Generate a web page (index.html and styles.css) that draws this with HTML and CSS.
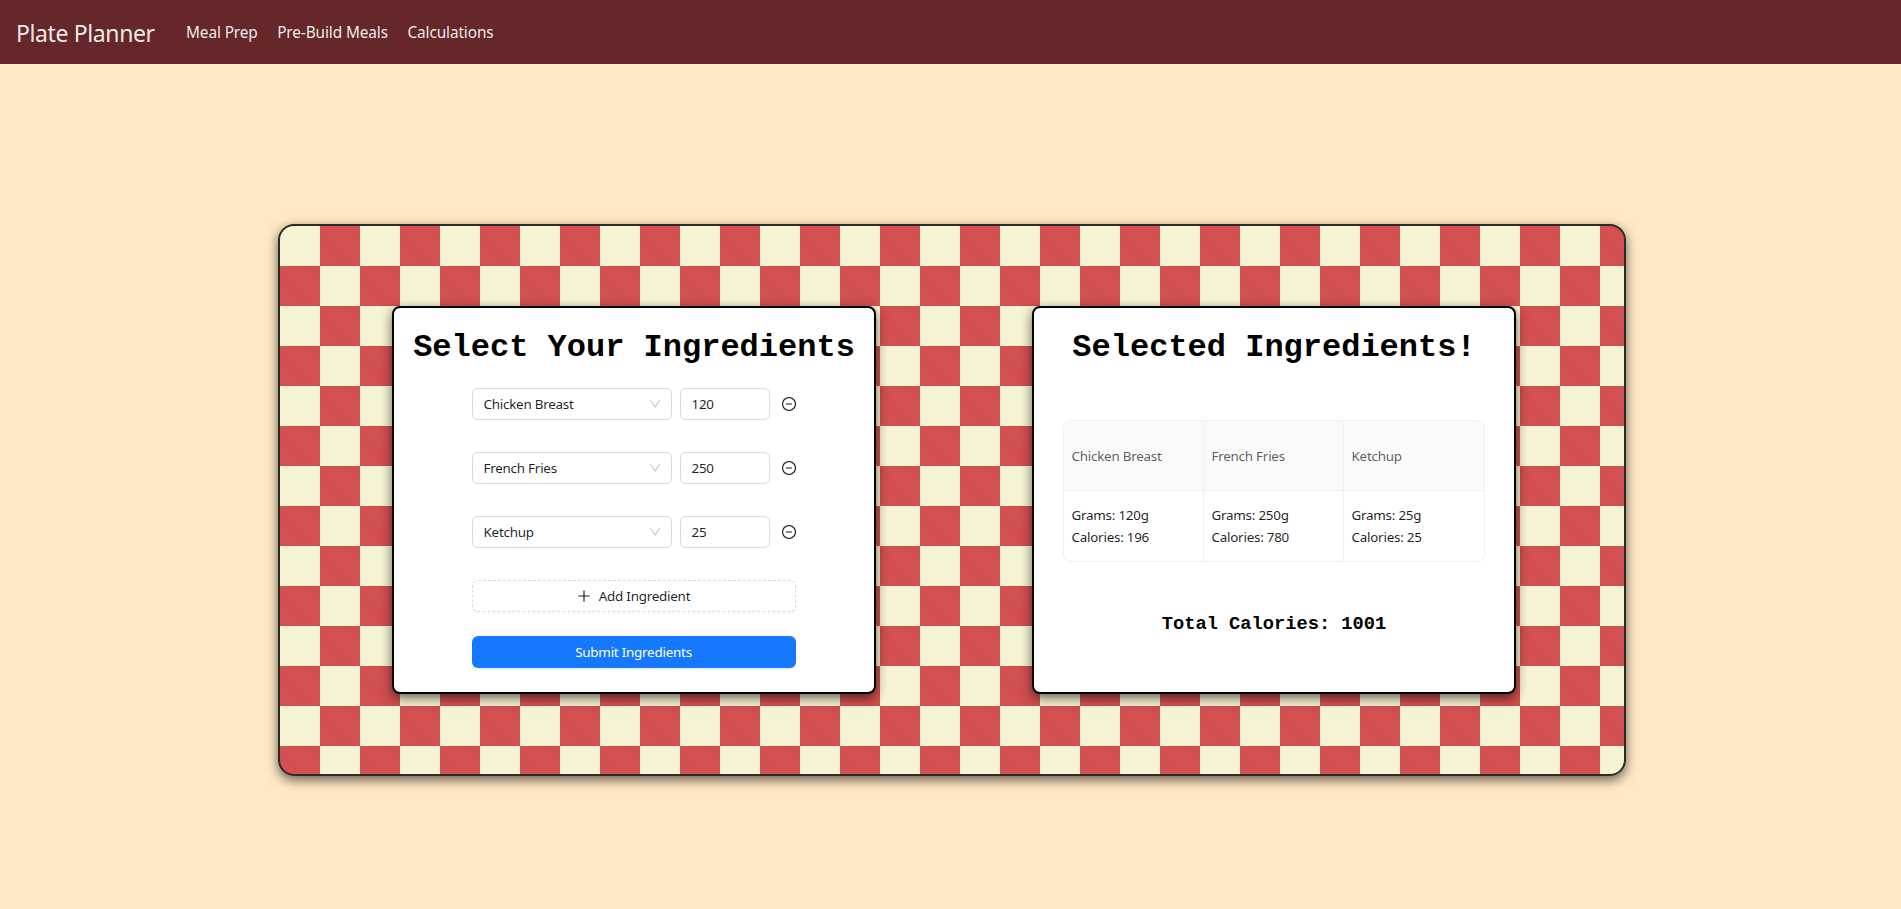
FILE: index.html
```html
<!DOCTYPE html>
<html lang="en">
<head>
<meta charset="utf-8">
<title>Plate Planner</title>
<link rel="stylesheet" href="styles.css">
</head>
<body>
<svg class="defs" aria-hidden="true">
  <symbol id="chevron" viewBox="64 64 896 896"><path d="M884 256h-75c-5.100 0-9.900 2.500-12.900 6.600L512 654.200 227.900 262.600c-3-4.100-7.800-6.600-12.900-6.600h-75c-6.500 0-10.300 7.400-6.500 12.700l352.600 486.100c12.800 17.600 39 17.600 51.700 0l352.600-486.100c3.900-5.300.1-12.700-6.400-12.700z"/></symbol>
  <symbol id="minus" viewBox="64 64 896 896"><path d="M696 480H328c-4.400 0-8 3.600-8 8v48c0 4.400 3.600 8 8 8h368c4.400 0 8-3.600 8-8v-48c0-4.400-3.600-8-8-8z"/><path d="M512 64C264.600 64 64 264.600 64 512s200.600 448 448 448 448-200.600 448-448S759.400 64 512 64zm0 820c-205.400 0-372-166.600-372-372s166.600-372 372-372 372 166.600 372 372-166.600 372-372 372z"/></symbol>
  <symbol id="plus" viewBox="64 64 896 896"><path d="M482 152h60q8 0 8 8v704q0 8-8 8h-60q-8 0-8-8V160q0-8 8-8z"/><path d="M192 474h672q8 0 8 8v60q0 8-8 8H160q-8 0-8-8v-60q0-8 8-8z"/></symbol>
</svg>
<header class="navbar">
  <a class="brand">Plate Planner</a>
  <nav class="links"><a>Meal Prep</a><a>Pre-Build Meals</a><a>Calculations</a></nav>
</header>
<main class="page">
  <section class="cloth">
    <div class="card">
      <h1 class="title">Select Your Ingredients</h1>
      <form class="form">
        <div class="row"><div class="select"><span>Chicken Breast</span><svg class="chevron"><use href="#chevron"/></svg></div><div class="input">120</div><svg class="minus"><use href="#minus"/></svg></div>
        <div class="row"><div class="select"><span>French Fries</span><svg class="chevron"><use href="#chevron"/></svg></div><div class="input">250</div><svg class="minus"><use href="#minus"/></svg></div>
        <div class="row"><div class="select"><span>Ketchup</span><svg class="chevron"><use href="#chevron"/></svg></div><div class="input">25</div><svg class="minus"><use href="#minus"/></svg></div>
        <button type="button" class="btn add"><svg class="plus"><use href="#plus"/></svg><span>Add Ingredient</span></button>
        <button type="button" class="btn submit"><span>Submit Ingredients</span></button>
      </form>
    </div>
    <div class="card">
      <h1 class="title">Selected Ingredients!</h1>
      <div class="table">
        <div class="cell head">Chicken Breast</div><div class="cell head">French Fries</div><div class="cell head">Ketchup</div>
        <div class="cell"><div>Grams: 120g</div><div>Calories: 196</div></div>
        <div class="cell"><div>Grams: 250g</div><div>Calories: 780</div></div>
        <div class="cell"><div>Grams: 25g</div><div>Calories: 25</div></div>
      </div>
      <h3 class="total">Total Calories: 1001</h3>
    </div>
  </section>
</main>
</body>
</html>
```
FILE: styles.css
```css
* { box-sizing: border-box; }
body { margin: 0; height: 909px; display: flex; flex-direction: column; background: #ffe8c4; font: 13.4px/22px "Noto Sans", sans-serif; color: rgba(0,0,0,.88); overflow: hidden; }
.defs { display: none; }
svg { fill: currentColor; flex: none; }
.navbar { height: 64px; flex: none; display: flex; align-items: center; padding-left: 16px; background: #652729; color: rgba(255,255,255,.92); }
.brand { width: 170px; font-size: 23px; line-height: 32px; letter-spacing: -.38px; padding-top: 2px; }
.links { display: flex; gap: 19.500px; font-size: 15.4px; line-height: 24px; letter-spacing: -.12px; white-space: nowrap; padding-top: 1px; }
.page { flex: 1; display: flex; justify-content: center; align-items: flex-start; padding-top: 160px; padding-left: 3px; }
.cloth {
  width: 1348px; height: 552px; display: flex; justify-content: center; align-items: center; gap: 156px; padding-left: 4px;
  border: 2px solid #2b2b2b; border-radius: 16px; box-shadow: 0 4px 12px rgba(0,0,0,.6);
  background:
    linear-gradient(45deg, rgba(255,255,200,.03), transparent 49.9%, rgba(255,255,200,.025) 50%, transparent) 0 0 / 40px 40px,
    repeating-conic-gradient(#d24e4e 0 25%, #f7f4d5 0 50%) 0 0 / 80px 80px;
}
.card { width: 484px; height: 388px; display: flex; flex-direction: column; align-items: center; border: 2px solid #000; border-radius: 8px; background: #fff; box-shadow: 0 4px 12px rgba(0,0,0,.6); }
.title { margin: 21px 0 0; font: bold 32px/38px "Courier New", "Liberation Mono", monospace; color: #000; white-space: nowrap; }
.form { width: 324px; margin-top: 21px; letter-spacing: -.23px; }
.row { height: 32px; margin-bottom: 32px; display: flex; align-items: center; }
.select, .input { height: 32px; display: flex; align-items: center; border: 1px solid #d9d9d9; border-radius: 6px; padding: 0 10px 0 10.5px; }
.select { width: 200px; justify-content: space-between; }
.input { width: 90px; margin-left: 8px; }
.chevron { width: 12px; height: 12px; color: #bfbfbf; }
.minus { width: 14px; height: 14px; margin-left: 12px; }
.btn { width: 324px; height: 32px; display: flex; align-items: center; justify-content: center; border-radius: 6px; font: inherit; letter-spacing: inherit; padding: 0 1px 0 0; }
.add { gap: 8px; color: rgba(0,0,0,.88); background: #fff; border: 1px dashed #d9d9d9; box-shadow: 0 2px 0 rgba(0,0,0,.02); }
.plus { width: 14px; height: 14px; }
.submit { margin-top: 24px; color: #fff; background: #1677ff; border: 0; box-shadow: 0 2px 0 rgba(5,145,255,.1); }
.table { width: 422px; height: 142px; margin-top: 53px; display: grid; grid-template-columns: 140px 140px 140px; grid-template-rows: 70px 70px; border: 1px solid #f0f0f0; border-radius: 8px; overflow: hidden; letter-spacing: -.23px; }
.cell { padding: 0 7.500px; border-right: 1px solid #f0f0f0; display: flex; flex-direction: column; justify-content: center; }
.cell:nth-child(3n) { border-right: 0; }
.head { background: #fafafa; color: rgba(0,0,0,.65); border-bottom: 1px solid #f0f0f0; padding-top: 1px; }
.total { margin: 51px 0 0; font: bold 18.720px/22px "Courier New", "Liberation Mono", monospace; color: #000; }
```
